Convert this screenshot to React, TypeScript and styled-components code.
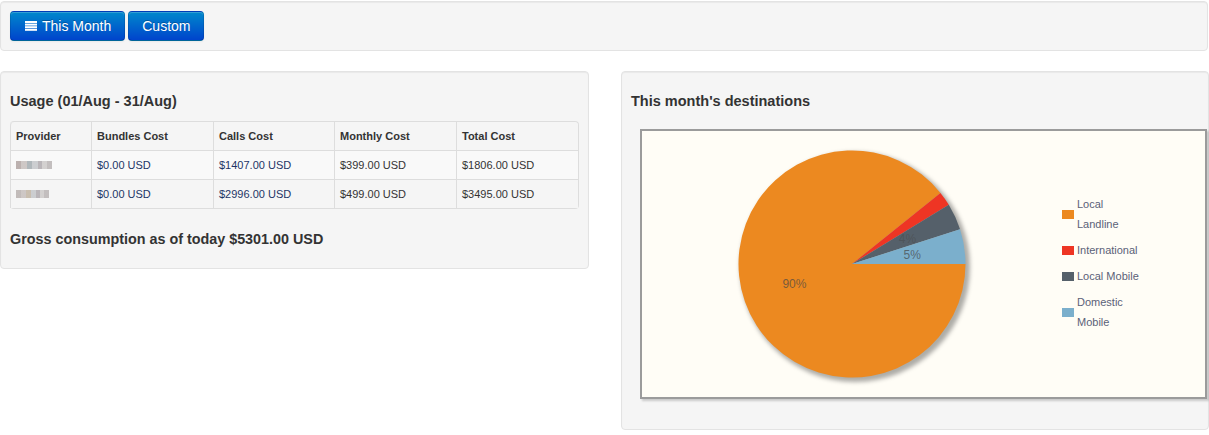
import React from "react";
import styled, { createGlobalStyle } from "styled-components";

const Global = createGlobalStyle`
  html, body { margin: 0; padding: 0; background: #fff; }
  body { font-family: "Liberation Sans", Arial, sans-serif; font-size: 14px; line-height: 20px; color: #333; }
  * { box-sizing: border-box; }
`;

const Page = styled.div`
  padding-top: 1px;
  width: 1209px;
`;

const Well = styled.div`
  background: #f5f5f5;
  border: 1px solid #e3e3e3;
  border-radius: 4px;
  box-shadow: inset 0 1px 1px rgba(0, 0, 0, 0.05);
`;

const Toolbar = styled(Well)`
  display: flex;
  gap: 3px;
  padding: 9px;
  width: 1208px;
`;

const Button = styled.button`
  display: inline-flex;
  align-items: center;
  gap: 4px;
  height: 30px;
  padding: 4px 13px;
  font-family: "Liberation Sans", Arial, sans-serif;
  font-size: 14px;
  line-height: 20px;
  color: #fff;
  text-shadow: 0 -1px 0 rgba(0, 0, 0, 0.25);
  background-color: #0055cc;
  background-image: linear-gradient(to bottom, #0088cc, #0044cc);
  border: 1px solid;
  border-color: rgba(0, 0, 0, 0.1) rgba(0, 0, 0, 0.1) rgba(0, 0, 0, 0.25);
  border-radius: 4px;
  box-shadow: inset 0 1px 0 rgba(255, 255, 255, 0.2), 0 1px 2px rgba(0, 0, 0, 0.05);
  cursor: pointer;
`;

const Row = styled.div`
  display: flex;
  gap: 32px;
  margin-top: 20px;
  align-items: flex-start;
`;

const Panel = styled(Well)<{ $w: number }>`
  width: ${(p) => p.$w}px;
  padding: 9px;
`;

const Title = styled.h4`
  margin: 10px 0;
  font-size: 14.5px;
  line-height: 20px;
  font-weight: bold;
  color: #333;
`;

const Table = styled.table`
  width: 568px;
  border-collapse: separate;
  border-spacing: 0;
  border: 1px solid #ddd;
  border-left: 0;
  border-radius: 4px;
  margin: 10px 0 20px;
  font-size: 11px;
  line-height: 20px;
  table-layout: fixed;
`;

const Th = styled.th<{ $w: number }>`
  width: ${(p) => p.$w}px;
  text-align: left;
  font-weight: bold;
  color: #333;
  padding: 4px 5px;
  border-left: 1px solid #ddd;
  background: #f5f5f5;
  &:first-child { border-top-left-radius: 4px; }
  &:last-child { border-top-right-radius: 4px; }
`;

const Td = styled.td<{ $odd: boolean; $dark?: boolean }>`
  padding: 4px 5px;
  border-left: 1px solid #ddd;
  border-top: 1px solid #ddd;
  color: ${(p) => (p.$dark ? "#333" : "#1d3566")};
  background: ${(p) => (p.$odd ? "#f9f9f9" : "#f5f5f5")};
`;

const Blur = styled.span<{ $w: number; $a: string; $b: string }>`
  display: inline-block;
  vertical-align: middle;
  width: ${(p) => p.$w}px;
  height: 8px;
  margin-top: -2px;
  background: linear-gradient(
    to right,
    ${(p) => p.$a} 0 15%,
    #c9c2c0 15% 30%,
    ${(p) => p.$b} 30% 45%,
    #c7c9cc 45% 60%,
    #b3aeb2 60% 72%,
    #cfcccb 72% 86%,
    #bdb8b8 86% 100%
  );
  opacity: 0.9;
`;

const Gross = styled.h4`
  margin: 0 0 10px;
  font-size: 14.35px;
  line-height: 20px;
  font-weight: bold;
  color: #333;
`;

const ChartBox = styled.div`
  display: flex;
  align-items: center;
  width: 567px;
  height: 270px;
  margin: 18px 0 21px 9px;
  background: #fffdf6;
  border: 2px solid #9b9b9b;
  box-shadow: 2px 2px 2px rgba(0, 0, 0, 0.18);
`;

const Legend = styled.div`
  display: flex;
  flex-direction: column;
  gap: 6px;
  margin-top: -2px;
  font-size: 11px;
  line-height: 20px;
  color: #5b6178;
`;

const LegendItem = styled.div`
  display: flex;
  align-items: center;
  gap: 3px;
`;

const Swatch = styled.span<{ $c: string }>`
  width: 12px;
  height: 9px;
  background: ${(p) => p.$c};
  flex: none;
`;

const ListIcon = () => (
  <svg width="14" height="14" viewBox="0 0 14 14" aria-hidden>
    {[2, 4.6, 7.2, 9.8].map((y) => (
      <rect key={y} x="1" y={y} width="12" height="2" fill="#fff" />
    ))}
  </svg>
);

const slices = [
  { label: "Local Landline", lines: ["Local", "Landline"], color: "#ec8920", deg: 321.2, text: "90%" },
  { label: "International", lines: ["International"], color: "#ee3524", deg: 7.3, text: "" },
  { label: "Local Mobile", lines: ["Local Mobile"], color: "#55606a", deg: 13.7, text: "4%" },
  { label: "Domestic Mobile", lines: ["Domestic", "Mobile"], color: "#7bafcc", deg: 17.8, text: "5%" },
];

const Pie = () => {
  const cx = 210;
  const cy = 133;
  const r = 113.5;
  let start = 0;
  const pt = (a: number, rad: number) => {
    const t = (a * Math.PI) / 180;
    return [cx + rad * Math.cos(t), cy + rad * Math.sin(t)];
  };
  const parts = slices.map((s) => {
    const a0 = start;
    const a1 = start + s.deg;
    start = a1;
    const [x0, y0] = pt(a0, r);
    const [x1, y1] = pt(a1, r);
    const large = s.deg > 180 ? 1 : 0;
    const d = `M${cx},${cy} L${x0},${y0} A${r},${r} 0 ${large} 1 ${x1},${y1} Z`;
    const [lx, ly] = pt((a0 + a1) / 2, 61);
    return { d, color: s.color, lx, ly, text: s.text };
  });
  return (
    <svg width="420" height="266" viewBox="0 0 420 266" style={{ flex: "none" }}>
      <defs>
        <filter id="sh" x="-20%" y="-20%" width="140%" height="140%">
          <feGaussianBlur stdDeviation="2.2" />
        </filter>
      </defs>
      <circle cx={cx + 3} cy={cy + 3} r={r + 1.5} fill="rgba(0,0,0,0.32)" filter="url(#sh)" />
      {parts.map((p, i) => (
        <path key={i} d={p.d} fill={p.color} />
      ))}
      {parts.map((p, i) =>
        p.text ? (
          <text
            key={"t" + i}
            x={p.lx}
            y={p.ly + 4}
            textAnchor="middle"
            fontFamily="Liberation Sans, Arial, sans-serif"
            fontSize="12"
            fill={i === 2 ? "rgba(70,70,70,0.45)" : "rgba(70,70,70,0.7)"}
          >
            {p.text}
          </text>
        ) : null
      )}
    </svg>
  );
};

const rows = [
  { blur: 36, a: "#b5a9a7", b: "#a8b0b4", bundles: "$0.00 USD", calls: "$1407.00 USD", monthly: "$399.00 USD", total: "$1806.00 USD" },
  { blur: 33, a: "#bcb5b3", b: "#c4b8a8", bundles: "$0.00 USD", calls: "$2996.00 USD", monthly: "$499.00 USD", total: "$3495.00 USD" },
];

export default function App() {
  return (
    <Page>
      <Global />
      <Toolbar>
        <Button>
          <ListIcon />
          This Month
        </Button>
        <Button>Custom</Button>
      </Toolbar>
      <Row>
        <Panel $w={589}>
          <Title>Usage (01/Aug - 31/Aug)</Title>
          <Table>
            <thead>
              <tr>
                <Th $w={81}>Provider</Th>
                <Th $w={122}>Bundles Cost</Th>
                <Th $w={121}>Calls Cost</Th>
                <Th $w={122}>Monthly Cost</Th>
                <Th $w={122}>Total Cost</Th>
              </tr>
            </thead>
            <tbody>
              {rows.map((r, i) => (
                <tr key={i}>
                  <Td $odd={i === 0}>
                    <Blur $w={r.blur} $a={r.a} $b={r.b} />
                  </Td>
                  <Td $odd={i === 0}>{r.bundles}</Td>
                  <Td $odd={i === 0}>{r.calls}</Td>
                  <Td $odd={i === 0} $dark>{r.monthly}</Td>
                  <Td $odd={i === 0} $dark>{r.total}</Td>
                </tr>
              ))}
            </tbody>
          </Table>
          <Gross>Gross consumption as of today $5301.00 USD</Gross>
        </Panel>
        <Panel $w={588}>
          <Title>This month's destinations</Title>
          <ChartBox>
            <Pie />
            <Legend>
              {slices.map((s) => (
                <LegendItem key={s.label}>
                  <Swatch $c={s.color} />
                  <span>
                    {s.lines.map((l, i) => (
                      <React.Fragment key={l}>
                        {i > 0 && <br />}
                        {l}
                      </React.Fragment>
                    ))}
                  </span>
                </LegendItem>
              ))}
            </Legend>
          </ChartBox>
        </Panel>
      </Row>
    </Page>
  );
}
